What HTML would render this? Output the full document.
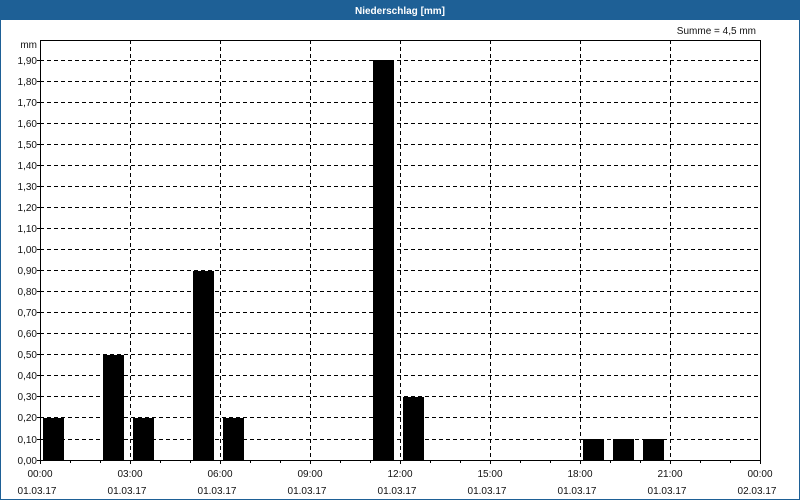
<!DOCTYPE html>
<html><head><meta charset="utf-8"><style>
html,body{margin:0;padding:0;background:#fff}
svg{display:block}
text{font-family:"Liberation Sans",sans-serif;font-size:10px;fill:#111}
</style></head><body>
<svg width="800" height="500" xmlns="http://www.w3.org/2000/svg">
<rect x="0" y="0" width="800" height="500" fill="#1e6096"/>
<rect x="1" y="20" width="798" height="479" fill="#fff"/>
<text x="400" y="14" text-anchor="middle" style="fill:#fff;font-weight:bold;font-size:10px">Niederschlag [mm]</text>
<text x="756" y="34" text-anchor="end">Summe = 4,5 mm</text>
<text x="37" y="48" text-anchor="end">mm</text>
<g stroke="#000" stroke-width="1" stroke-dasharray="4,3" shape-rendering="crispEdges">
<path d="M40 60.5H760M40 81.5H760M40 102.5H760M40 123.5H760M40 144.5H760M40 165.5H760M40 186.5H760M40 207.5H760M40 228.5H760M40 249.5H760M40 270.5H760M40 291.5H760M40 312.5H760M40 333.5H760M40 354.5H760M40 375.5H760M40 396.5H760M40 417.5H760M40 439.5H760"/>
<path d="M130.5 40V460M220.5 40V460M310.5 40V460M400.5 40V460M490.5 40V460M580.5 40V460M670.5 40V460"/>
</g>
<g fill="#000" shape-rendering="crispEdges">
<rect x="43" y="418" width="21" height="42"/>
<rect x="103" y="355" width="21" height="105"/>
<rect x="133" y="418" width="21" height="42"/>
<rect x="193" y="271" width="21" height="189"/>
<rect x="223" y="418" width="21" height="42"/>
<rect x="373" y="60" width="21" height="400"/>
<rect x="403" y="397" width="21" height="63"/>
<rect x="583" y="439" width="21" height="21"/>
<rect x="613" y="439" width="21" height="21"/>
<rect x="643" y="439" width="21" height="21"/>
</g>
<rect x="40.5" y="40.5" width="720" height="420" fill="none" stroke="#000" shape-rendering="crispEdges"/>
<g stroke="#000" shape-rendering="crispEdges">
<path d="M40.5 460V464M70.5 460V463M100.5 460V463M130.5 460V464M160.5 460V463M190.5 460V463M220.5 460V464M250.5 460V463M280.5 460V463M310.5 460V464M340.5 460V463M370.5 460V463M400.5 460V464M430.5 460V463M460.5 460V463M490.5 460V464M520.5 460V463M550.5 460V463M580.5 460V464M610.5 460V463M640.5 460V463M670.5 460V464M700.5 460V463M730.5 460V463M760.5 460V464"/>
<path d="M37 60.5H40M37 81.5H40M37 102.5H40M37 123.5H40M37 144.5H40M37 165.5H40M37 186.5H40M37 207.5H40M37 228.5H40M37 249.5H40M37 270.5H40M37 291.5H40M37 312.5H40M37 333.5H40M37 354.5H40M37 375.5H40M37 396.5H40M37 417.5H40M37 439.5H40M37 460.5H40"/>
</g>
<g text-anchor="end">
<text x="37" y="64">1,90</text><text x="37" y="85">1,80</text><text x="37" y="106">1,70</text><text x="37" y="127">1,60</text><text x="37" y="148">1,50</text><text x="37" y="169">1,40</text><text x="37" y="190">1,30</text><text x="37" y="211">1,20</text><text x="37" y="232">1,10</text><text x="37" y="253">1,00</text><text x="37" y="274">0,90</text><text x="37" y="295">0,80</text><text x="37" y="316">0,70</text><text x="37" y="337">0,60</text><text x="37" y="358">0,50</text><text x="37" y="379">0,40</text><text x="37" y="400">0,30</text><text x="37" y="421">0,20</text><text x="37" y="443">0,10</text><text x="37" y="464">0,00</text>
</g>
<g text-anchor="middle">
<text x="40" y="477">00:00</text><text x="130" y="477">03:00</text><text x="220" y="477">06:00</text><text x="310" y="477">09:00</text><text x="400" y="477">12:00</text><text x="490" y="477">15:00</text><text x="580" y="477">18:00</text><text x="670" y="477">21:00</text><text x="760" y="477">00:00</text>
<text x="37" y="494">01.03.17</text><text x="127" y="494">01.03.17</text><text x="217" y="494">01.03.17</text><text x="307" y="494">01.03.17</text><text x="397" y="494">01.03.17</text><text x="487" y="494">01.03.17</text><text x="577" y="494">01.03.17</text><text x="667" y="494">01.03.17</text><text x="757" y="494">02.03.17</text>
</g>
</svg>
</body></html>
